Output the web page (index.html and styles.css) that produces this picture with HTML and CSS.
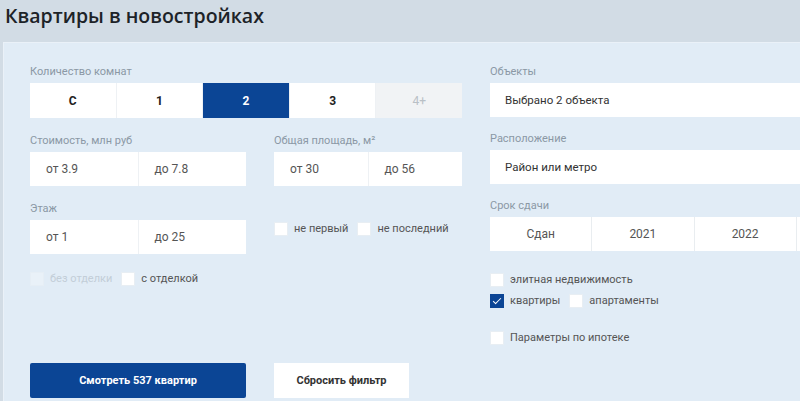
FILE: index.html
```html
<!DOCTYPE html>
<html lang="ru">
<head>
  <meta charset="UTF-8">
  <title>Квартиры в новостройках</title>
  <link rel="stylesheet" href="styles.css">
</head>
<body>

<div class="page-head">
  <h1>Квартиры в новостройках</h1>
</div>

<div class="filter">
  <div class="col-left">
    <div class="field">
      <div class="label">Количество комнат</div>
      <div class="seg rooms">
        <button>С</button>
        <button>1</button>
        <button class="active">2</button>
        <button>3</button>
        <button class="off">4+</button>
      </div>
    </div>

    <div class="row">
      <div class="field w-price">
        <div class="label">Стоимость, млн руб</div>
        <div class="range">
          <div class="inp">от 3.9</div>
          <div class="inp">до 7.8</div>
        </div>
      </div>
      <div class="field w-area">
        <div class="label">Общая площадь, м²</div>
        <div class="range">
          <div class="inp">от 30</div>
          <div class="inp">до 56</div>
        </div>
      </div>
    </div>

    <div class="row">
      <div class="field w-price">
        <div class="label">Этаж</div>
        <div class="range">
          <div class="inp">от 1</div>
          <div class="inp">до 25</div>
        </div>
      </div>
      <div class="checks floor-checks">
        <label class="chk"><span class="box"></span>не первый</label>
        <label class="chk"><span class="box"></span>не последний</label>
      </div>
    </div>

    <div class="checks finish">
      <label class="chk disabled"><span class="box"></span>без отделки</label>
      <label class="chk"><span class="box"></span>с отделкой</label>
    </div>

    <div class="actions">
      <button class="btn primary">Смотреть 537 квартир</button>
      <button class="btn secondary">Сбросить фильтр</button>
    </div>
  </div>

  <div class="col-right">
    <div class="field">
      <div class="label">Объекты</div>
      <div class="inp wide">Выбрано 2 объекта</div>
    </div>
    <div class="field mt">
      <div class="label">Расположение</div>
      <div class="inp wide">Район или метро</div>
    </div>
    <div class="field mt">
      <div class="label">Срок сдачи</div>
      <div class="seg years">
        <button>Сдан</button>
        <button>2021</button>
        <button>2022</button>
        <button></button>
      </div>
    </div>

    <div class="checks kinds">
      <label class="chk"><span class="box"></span>элитная недвижимость</label>
    </div>
    <div class="checks kinds2">
      <label class="chk"><span class="box checked"></span>квартиры</label>
      <label class="chk"><span class="box"></span>апартаменты</label>
    </div>
    <div class="checks mortgage">
      <label class="chk"><span class="box"></span>Параметры по ипотеке</label>
    </div>
  </div>
</div>

</body>
</html>
```

FILE: styles.css
```css
html, body { margin: 0; height: 100%; overflow: hidden; }
body { background: #d2dce5; font-family: Roboto, "Liberation Sans", sans-serif; color: #333; }

.page-head { height: 42px; padding-left: 5px; }
.page-head h1 { margin: 0; font-family: "Open Sans", "Liberation Sans", sans-serif; font-weight: 600; font-size: 19.5px; line-height: 30px; color: #1d2328; padding-top: 1px; }

.filter { display: flex; gap: 28px; margin-left: 3px; background: #e1ecf6; border-top: 1px solid #eaf1f8; border-left: 1px solid #eaf1f8; padding: 21px 0 40px 26px; min-height: 400px; width: 1000px; }

.col-left { width: 432px; flex: none; }
.col-right { width: 408px; flex: none; }

.label { font-size: 11px; line-height: 16px; color: #8b98a5; margin-bottom: 3px; white-space: nowrap; }

.row { display: flex; gap: 28px; margin-top: 15px; }
.w-price { width: 216px; }
.w-area { width: 188px; }
.mt { margin-top: 14px; }

.seg { display: flex; height: 35px; background: #fff; }
.seg button { flex: 1; border: none; border-right: 1px solid #eef1f4; background: #fff; font-family: Roboto, sans-serif; font-size: 12px; font-weight: 700; color: #222; padding: 0; }
.seg button:last-child { border-right: none; }
.seg .active { background: #0b4595; color: #fff; }
.seg .off { background: #f1f3f5; color: #b9c0c6; font-weight: 400; }
.years { height: 34px; }
.years button { font-weight: 400; color: #555; border-right-color: #e9edf0; }

.range { display: flex; height: 34px; background: #fff; }
.range .inp { flex: 1; }
.range .inp + .inp { border-left: 1px solid #eef1f4; }
.inp { background: #fff; height: 34px; line-height: 34px; padding-left: 16px; font-size: 12px; color: #555; }
.inp.wide { padding-left: 15px; font-size: 11.5px; color: #333; }

.checks { display: flex; gap: 10px; font-size: 11px; color: #555; }
.chk { display: flex; align-items: center; gap: 6px; line-height: 16px; white-space: nowrap; }
.box { width: 14px; height: 14px; background: #fff; box-sizing: border-box; border: 1px solid #e8eef3; position: relative; }
.box.checked { background: #0b4595; border-color: #0b4595; }
.box.checked::after { content: ""; position: absolute; left: 4px; top: 1px; width: 3px; height: 7px; border: solid #fff; border-width: 0 1.5px 1.5px 0; transform: rotate(45deg); }
.chk.disabled { color: #c3ced8; }
.chk.disabled .box { background: #e9f1f8; border-color: #e6eef5; }

.floor-checks { padding-top: 1px; align-self: flex-start; margin-top: 19px; gap: 9px; }
.finish { margin-top: 17px; gap: 9px; }

.kinds { margin-top: 21px; }
.kinds2 { margin-top: 5px; gap: 9px; }
.mortgage { margin-top: 21px; }

.actions { display: flex; gap: 28px; margin-top: 76px; }
.btn { height: 35px; border: none; font-family: Roboto, sans-serif; font-weight: 700; font-size: 11px; padding: 0; }
.primary { width: 216px; background: #0b4595; color: #fff; border-radius: 2px; }
.secondary { width: 135px; background: #fff; color: #333; }
```
